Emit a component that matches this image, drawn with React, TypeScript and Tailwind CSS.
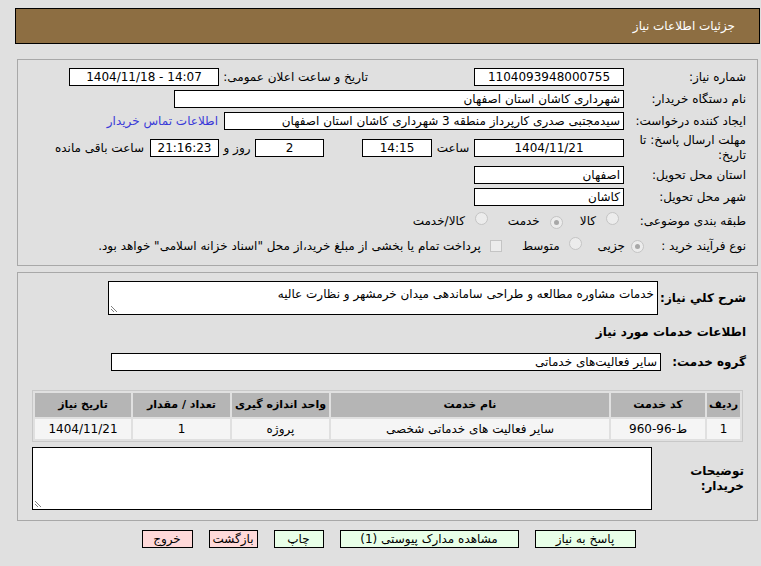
import React from 'react';

const inputBox = 'h-[18px] border border-black bg-white flex items-center px-[3px] whitespace-nowrap overflow-hidden';

function Radio({ checked }: { checked?: boolean }) {
  return (
    <span className="inline-flex h-[13px] w-[13px] items-center justify-center rounded-full border border-[#c4c4c4] bg-[#ececec] shrink-0">
      {checked && <span className="h-[5px] w-[5px] rounded-full bg-[#a8a8a8]" />}
    </span>
  );
}

function Grip() {
  return (
    <svg className="absolute bottom-[1px] left-[1px]" width="8" height="8" viewBox="0 0 8 8">
      <path d="M1 1 L7 7 M1 4 L4 7" stroke="#808080" strokeWidth="1" />
    </svg>
  );
}

export default function App() {
  return (
    <div dir="rtl" className="min-h-[566px] w-full bg-[#e0e0e0] pt-[8px] text-[12px] text-black font-['Tahoma','DejaVu_Sans',sans-serif]">
      <div className="ml-[15px] mr-[1px] flex h-[36px] items-center border border-black bg-[#8d6e42] pr-[24px] text-white">
        جزئیات اطلاعات نیاز
      </div>

      {/* main info */}
      <div className="ml-[17px] mr-[3px] mt-[15px] border border-[#a8a8a8] pb-[7px] pr-[11px] pt-[6px]">
        <div className="flex h-[22px] items-center">
          <div className="w-[122px] shrink-0">شماره نیاز:</div>
          <div className={`${inputBox} w-[150px] justify-center`}>1104093948000755</div>
          <div className="w-[106px]" />
          <div className="w-[149px]">تاریخ و ساعت اعلان عمومی:</div>
          <div dir="ltr" className={`${inputBox} w-[150px] justify-center`}>1404/11/18 - 14:07</div>
        </div>
        <div className="flex h-[22px] items-center">
          <div className="w-[122px] shrink-0">نام دستگاه خریدار:</div>
          <div className={`${inputBox} w-[450px]`}>شهرداری کاشان استان اصفهان</div>
        </div>
        <div className="flex h-[22px] items-center">
          <div className="w-[122px] shrink-0">ایجاد کننده درخواست:</div>
          <div className={`${inputBox} w-[400px]`}>سیدمجتبی صدری کارپرداز منطقه 3 شهرداری کاشان استان اصفهان</div>
          <div className="mr-[6px] text-[#3a3ad8]">اطلاعات تماس خریدار</div>
        </div>
        <div className="flex h-[32px] items-center">
          <div className="w-[122px] shrink-0 leading-[15px]">مهلت ارسال پاسخ: تا تاریخ:</div>
          <div className={`${inputBox} w-[150px] justify-center`}>1404/11/21</div>
          <div className="w-[42px] text-center">ساعت</div>
          <div className={`${inputBox} w-[70px] justify-center`}>14:15</div>
          <div className="w-[38px]" />
          <div className={`${inputBox} w-[69px] justify-center`}>2</div>
          <div className="w-[36px] text-center">روز و</div>
          <div className={`${inputBox} w-[69px] justify-center bg-[#eeeed2]`}>21:16:23</div>
          <div className="mr-[6px]">ساعت باقی مانده</div>
        </div>
        <div className="flex h-[22px] items-center">
          <div className="w-[122px] shrink-0">استان محل تحویل:</div>
          <div className={`${inputBox} w-[150px]`}>اصفهان</div>
        </div>
        <div className="flex h-[22px] items-center">
          <div className="w-[122px] shrink-0">شهر محل تحویل:</div>
          <div className={`${inputBox} w-[150px]`}>کاشان</div>
        </div>
        <div className="flex h-[26px] items-center">
          <div className="w-[122px] shrink-0">طبقه بندی موضوعی:</div>
          <span className="mr-[5px]"><Radio /></span>
          <span className="mr-[10px]">کالا</span>
          <span className="mr-[17px]"><Radio checked /></span>
          <span className="mr-[10px]">خدمت</span>
          <span className="mr-[20px]"><Radio /></span>
          <span className="mr-[10px]">کالا/خدمت</span>
        </div>
        <div className="flex h-[24px] items-center">
          <div className="w-[102px] shrink-0">نوع فرآیند خرید :</div>
          <Radio checked />
          <span className="mr-[6px]">جزیی</span>
          <span className="mr-[16px]"><Radio /></span>
          <span className="mr-[9px]">متوسط</span>
          <span className="mr-[20px] h-[12px] w-[12px] border border-[#c4c4c4] bg-[#ececec]" />
          <span className="mr-[9px]">پرداخت تمام یا بخشی از مبلغ خرید،از محل "اسناد خزانه اسلامی" خواهد بود.</span>
        </div>
      </div>

      {/* services */}
      <div className="ml-[17px] mr-[3px] mt-[6px] border border-[#a8a8a8] pb-[10px] pr-[11px] pt-[8px]">
        <div className="flex items-center">
          <div className="w-[88px] shrink-0 font-bold">شرح کلي نياز:</div>
          <div className="relative h-[34px] w-[550px] border border-black bg-white px-[3px] pt-[3px]">
            خدمات مشاوره مطالعه و طراحی ساماندهی میدان خرمشهر و نظارت عالیه
            <Grip />
          </div>
        </div>
        <div className="mt-[8px] h-[16px] font-bold">اطلاعات خدمات مورد نياز</div>
        <div className="mt-[14px] flex items-center">
          <div className="w-[85px] shrink-0 font-bold">گروه خدمت:</div>
          <div className={`${inputBox} w-[550px]`}>سایر فعالیت‌های خدماتی</div>
        </div>
        <table className="mr-[3px] mt-[19px] w-[711px] table-fixed border-separate border-spacing-[2px] border border-[#c8c8c8] whitespace-nowrap">
          <thead>
            <tr className="h-[24px] bg-[#b5b5b5] text-[11px] font-bold">
              <th className="w-[33px] text-center">ردیف</th>
              <th className="w-[94px] text-center">کد خدمت</th>
              <th className="w-[278px] text-center">نام خدمت</th>
              <th className="w-[97px] text-center">واحد اندازه گیری</th>
              <th className="w-[97px] text-center">تعداد / مقدار</th>
              <th className="text-center">تاریخ نیاز</th>
            </tr>
          </thead>
          <tbody>
            <tr className="h-[20px] bg-[#f5f5f5] text-center">
              <td>1</td>
              <td>ط-96-960</td>
              <td>سایر فعالیت های خدماتی شخصی</td>
              <td>پروژه</td>
              <td>1</td>
              <td>1404/11/21</td>
            </tr>
          </tbody>
        </table>
        <div className="mt-[5px] flex items-center">
          <div className="w-[94px] shrink-0 pr-[2px] font-bold leading-[15px]">
            توضیحات
            <br />
            خریدار:
          </div>
          <div className="relative h-[63px] w-[620px] border border-black bg-white">
            <Grip />
          </div>
        </div>
      </div>

      <div className="mt-[9px] flex justify-center gap-[16px] pl-[16px]">
        <div className="flex h-[18px] w-[101px] items-center justify-center border border-black bg-[#e8ffe8]">پاسخ به نیاز</div>
        <div className="flex h-[18px] w-[179px] items-center justify-center border border-black bg-[#e8ffe8]">مشاهده مدارک پیوستی (1)</div>
        <div className="flex h-[18px] w-[50px] items-center justify-center border border-black bg-[#e8ffe8]">چاپ</div>
        <div className="flex h-[18px] w-[49px] items-center justify-center border border-black bg-[#ffd9d9]">بازگشت</div>
        <div className="flex h-[18px] w-[51px] items-center justify-center border border-black bg-[#ffd9d9]">خروج</div>
      </div>
    </div>
  );
}
